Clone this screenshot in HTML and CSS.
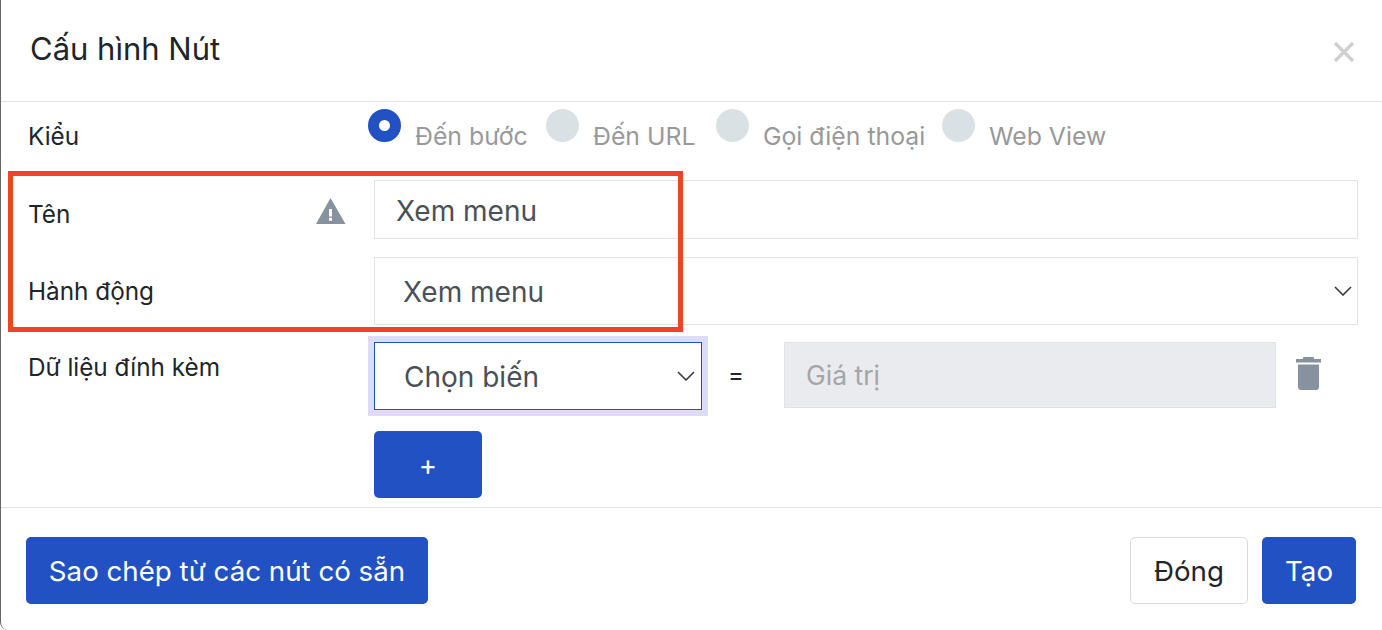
FILE: index.html
```html
<!DOCTYPE html>
<html lang="en">
<head>
    <meta charset="UTF-8">
    <meta name="viewport" content="width=device-width, initial-scale=1.0">
    <title>Cấu hình Nút</title>
    <link rel="stylesheet" href="styles.css">
</head>
<body>
    <div class="modal">
        <!-- Header -->
        <div class="modal-header">
            <h2 class="modal-title">Cấu hình Nút</h2>
            <svg class="close-icon" viewBox="0 0 22 22" width="22" height="22">
                <path d="M2 2 L20 20 M20 2 L2 20" stroke="#cfcfcf" stroke-width="3.2" fill="none"/>
            </svg>
        </div>

        <!-- Body -->
        <div class="modal-body">
            <div class="row row-type">
                <label class="row-label">Kiểu</label>
                <div class="radio-group">
                    <div class="radio-item">
                        <span class="radio radio-on"></span>
                        <span class="radio-text">Đến bước</span>
                    </div>
                    <div class="radio-item">
                        <span class="radio"></span>
                        <span class="radio-text">Đến URL</span>
                    </div>
                    <div class="radio-item">
                        <span class="radio"></span>
                        <span class="radio-text">Gọi điện thoại</span>
                    </div>
                    <div class="radio-item">
                        <span class="radio"></span>
                        <span class="radio-text">Web View</span>
                    </div>
                </div>
            </div>

            <div class="row row-name">
                <label class="row-label label-name">
                    Tên
                    <svg class="warn-icon" viewBox="0 0 30 26" width="30" height="26">
                        <path d="M14.5 0 L29.500 26 L0 26 Z M13 11 L13 18.500 L16 18.500 L16 11 Z M13 19.800 L13 22.800 L16 22.800 L16 19.800 Z" fill="#86939e" fill-rule="evenodd"/>
                    </svg>
                </label>
                <input class="text-input" type="text" value="Xem menu">
            </div>

            <div class="row row-action">
                <label class="row-label">Hành động</label>
                <div class="select select-wide">
                    <span>Xem menu</span>
                    <svg class="chevron" viewBox="0 0 18 10" width="18" height="10">
                        <path d="M1 1 L9 9 L17 1" stroke="#343a40" stroke-width="1.6" fill="none"/>
                    </svg>
                </div>
            </div>

            <div class="row row-data">
                <label class="row-label label-data">Dữ liệu đính kèm</label>
                <div class="data-col">
                    <div class="data-line">
                        <div class="select select-focus">
                            <span>Chọn biến</span>
                            <svg class="chevron" viewBox="0 0 18 10" width="18" height="10">
                                <path d="M1 1 L9 9 L17 1" stroke="#343a40" stroke-width="1.6" fill="none"/>
                            </svg>
                        </div>
                        <span class="equals">=</span>
                        <input class="text-input input-disabled" type="text" placeholder="Giá trị" disabled>
                        <svg class="trash-icon" viewBox="0 0 25 33" width="25" height="33">
                            <path d="M7 1 Q7 0 8 0 L17 0 Q18 0 18 1 L18 2 L25 2 L25 5.500 L0 5.500 L0 2 L7 2 Z M2 7.500 L23 7.500 L23 30 Q23 33 20 33 L5 33 Q2 33 2 30 Z" fill="#86939e"/>
                        </svg>
                    </div>
                    <button class="btn btn-primary btn-add">+</button>
                </div>
            </div>
        </div>

        <!-- Footer -->
        <div class="modal-footer">
            <button class="btn btn-primary btn-copy">Sao chép từ các nút có sẵn</button>
            <div class="footer-right">
                <button class="btn btn-light btn-close">Đóng</button>
                <button class="btn btn-primary btn-create">Tạo</button>
            </div>
        </div>

        <!-- Red annotation box -->
        <div class="highlight"></div>
    </div>
</body>
</html>
```

FILE: styles.css
```css
* {
    box-sizing: border-box;
}

html, body {
    margin: 0;
    padding: 0;
    height: 100%;
    background-color: #fff;
    overflow: hidden;
}

body {
    font-family: Inter, "Noto Sans", sans-serif;
    color: #212529;
}

.modal {
    position: relative;
    height: 630px;
    background-color: #fff;
    border-left: 1px solid #666;
    border-bottom-left-radius: 8px;
}

.modal-header {
    display: flex;
    justify-content: space-between;
    align-items: center;
    height: 102px;
    padding: 0 27px 0 29px;
    border-bottom: 1px solid #e1e3e6;
}

.modal-title {
    margin: 0 0 4px 0;
    font-size: 31px;
    font-weight: 400;
    color: #212529;
}

.close-icon {
    margin-top: 2px;
}

.modal-body {
    height: 406px;
    padding-left: 27px;
    border-bottom: 1px solid #e1e3e6;
}

.row {
    display: flex;
}

.row-label {
    flex: 0 0 346px;
    font-size: 24.3px;
}

.row-type {
    height: 78px;
}

.row-type .row-label {
    padding-top: 19px;
}

.radio-group {
    display: grid;
    grid-template-columns: 178px 170px 226px auto;
    margin-left: -6px;
    padding-top: 7px;
}

.radio-item {
    display: flex;
}

.radio {
    width: 33px;
    height: 33px;
    margin-right: 14px;
    border-radius: 50%;
    background-color: #dae1e5;
}

.radio-on {
    background-color: #fff;
    border: 11px solid #2251c4;
}

.radio-text {
    margin-top: 12px;
    font-size: 24.8px;
    color: #999;
}

.row-name {
    height: 59px;
    margin-bottom: 18px;
}

.label-name {
    display: flex;
    justify-content: space-between;
    padding: 19px 28px 0 0;
}

.warn-icon {
    margin-top: -1px;
}

.text-input {
    width: 984px;
    height: 59px;
    padding: 2px 21px 0;
    border: 1px solid #e1e3e8;
    border-radius: 0;
    outline: none;
    background-color: #fff;
    font-family: inherit;
    font-size: 28px;
    color: #495057;
}

.row-action {
    height: 68px;
    margin-bottom: 17px;
    align-items: center;
}

.select {
    display: flex;
    justify-content: space-between;
    align-items: center;
    height: 68px;
    padding: 2px 14px 0 28px;
    border: 1px solid #e1e3e8;
    background-color: #fff;
    font-size: 28px;
    color: #495057;
}

.select-wide {
    width: 984px;
    padding-right: 5px;
}

.select-focus {
    width: 328px;
    padding-left: 29px;
    padding-right: 6px;
    border-color: #2251c4;
    box-shadow: 0 0 0 6px #dedbf8;
}

.chevron {
    margin-top: -2px;
}

.label-data {
    padding-top: 10px;
}

.data-line {
    display: flex;
    align-items: flex-start;
}

.equals {
    width: 82px;
    padding: 18px 0 0 26px;
    font-size: 24px;
}

.input-disabled {
    width: 492px;
    height: 66px;
    padding-top: 0;
    background-color: #e9ebef;
    border-color: #dfe2e6;
    font-size: 26.5px;
}

.input-disabled::placeholder {
    color: #a3a5a8;
}

.trash-icon {
    margin: 15px 0 0 20px;
}

.btn {
    height: 67px;
    border-radius: 5px;
    border: 1px solid transparent;
    font-family: inherit;
    font-size: 27.7px;
}

.btn-primary {
    background-color: #2251c4;
    color: #fff;
}

.btn-light {
    background-color: #fff;
    border-color: #d9dadb;
    color: #212529;
}

.btn-add {
    display: block;
    width: 108px;
    margin-top: 21px;
}

.modal-footer {
    display: flex;
    justify-content: space-between;
    align-items: flex-start;
    padding: 29px 26px 0 25px;
}

.btn-copy {
    width: 402px;
    padding: 0;
}

.footer-right {
    display: flex;
    gap: 14px;
}

.btn-close {
    width: 118px;
    padding: 0;
}

.btn-create {
    width: 94px;
    padding: 0;
}

/* annotation drawn over the form */
.highlight {
    position: absolute;
    top: 171px;
    left: 7px;
    width: 675px;
    height: 161px;
    border: 5px solid #ee4426;
    pointer-events: none;
}
```
